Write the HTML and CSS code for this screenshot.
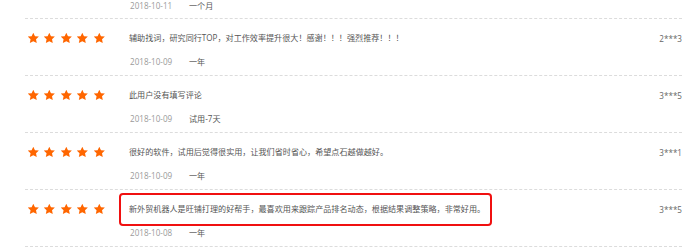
FILE: index.html
```html
<!DOCTYPE html>
<html lang="zh-CN">
<head>
<meta charset="utf-8">
<title>评价列表</title>
<link rel="stylesheet" href="styles.css">
</head>
<body>
<svg class="defs" width="0" height="0" aria-hidden="true">
  <symbol id="star" viewBox="0 0 24 24">
    <path d="M12 1.2l3.2 6.7 7.4.9-5.4 5.1 1.4 7.3L12 17.6l-6.6 3.6 1.4-7.3-5.4-5.1 7.4-.9z"/>
  </symbol>
</svg>
<div class="list">
  <div class="head">
    <div class="meta"><span class="date">2018-10-11</span><span class="period">一个月</span></div>
  </div>

  <div class="row">
    <div class="main">
      <div class="stars"><svg><use href="#star"/></svg><svg><use href="#star"/></svg><svg><use href="#star"/></svg><svg><use href="#star"/></svg><svg><use href="#star"/></svg></div>
      <div class="comment"><span class="text">辅助找词，研究同行TOP，对工作效率提升很大！感谢！！！强烈推荐！！！</span></div>
      <div class="user">2***3</div>
    </div>
    <div class="meta"><span class="date">2018-10-09</span><span class="period">一年</span></div>
  </div>

  <div class="row">
    <div class="main">
      <div class="stars"><svg><use href="#star"/></svg><svg><use href="#star"/></svg><svg><use href="#star"/></svg><svg><use href="#star"/></svg><svg><use href="#star"/></svg></div>
      <div class="comment"><span class="text">此用户没有填写评论</span></div>
      <div class="user">3***5</div>
    </div>
    <div class="meta"><span class="date">2018-10-09</span><span class="period">试用-7天</span></div>
  </div>

  <div class="row">
    <div class="main">
      <div class="stars"><svg><use href="#star"/></svg><svg><use href="#star"/></svg><svg><use href="#star"/></svg><svg><use href="#star"/></svg><svg><use href="#star"/></svg></div>
      <div class="comment"><span class="text">很好的软件，试用后觉得很实用，让我们省时省心，希望点石越做越好。</span></div>
      <div class="user">3***1</div>
    </div>
    <div class="meta"><span class="date">2018-10-09</span><span class="period">一年</span></div>
  </div>

  <div class="row last">
    <div class="main">
      <div class="stars"><svg><use href="#star"/></svg><svg><use href="#star"/></svg><svg><use href="#star"/></svg><svg><use href="#star"/></svg><svg><use href="#star"/></svg></div>
      <div class="comment"><span class="text highlight">新外贸机器人是旺铺打理的好帮手，最喜欢用来跟踪产品排名动态，根据结果调整策略，非常好用。</span></div>
      <div class="user">3***5</div>
    </div>
    <div class="meta"><span class="date">2018-10-08</span><span class="period">一年</span></div>
  </div>
</div>
</body>
</html>
```

FILE: styles.css
```css
html, body {
  margin: 0;
  padding: 0;
  background: #fff;
}
body {
  font-family: "Open Sans", "Noto Sans CJK SC", sans-serif;
  font-size: 8.1px;
  color: #555;
  overflow: hidden;
}
.defs {
  position: absolute;
  width: 0;
  height: 0;
}
.list {
  margin-left: 25px;
  width: 657px;
}
.head {
  height: 18px;
}
.head .meta {
  margin-top: 0;
}
.row {
  border-top: 1px dashed #dcdcdc;
  padding: 11px 0 7px;
  height: 38px;
}
.row.last {
  border-bottom: 1px dashed #dcdcdc;
}
.main {
  display: flex;
  align-items: center;
  height: 16px;
}
.stars {
  width: 104px;
  flex: none;
  display: flex;
  gap: 3.9px;
  padding-left: 2px;
  box-sizing: border-box;
}
.stars svg {
  width: 12.6px;
  height: 12.6px;
  fill: #ff6600;
}
.comment {
  flex: 1;
  line-height: 16px;
  white-space: nowrap;
}
.text {
  display: inline-block;
}
.highlight {
  position: relative;
}
.highlight::after {
  content: "";
  position: absolute;
  left: -10px;
  right: -7px;
  top: -8px;
  bottom: -9px;
  border: 2px solid #f01010;
  border-radius: 4px;
}
.user {
  flex: none;
  color: #666;
}
.meta {
  margin-top: 10px;
  margin-left: 105px;
  height: 12px;
  line-height: 12px;
  white-space: nowrap;
}
.date {
  display: inline-block;
  width: 59px;
  color: #9a9a9a;
}
.period {
  color: #555;
}
```
